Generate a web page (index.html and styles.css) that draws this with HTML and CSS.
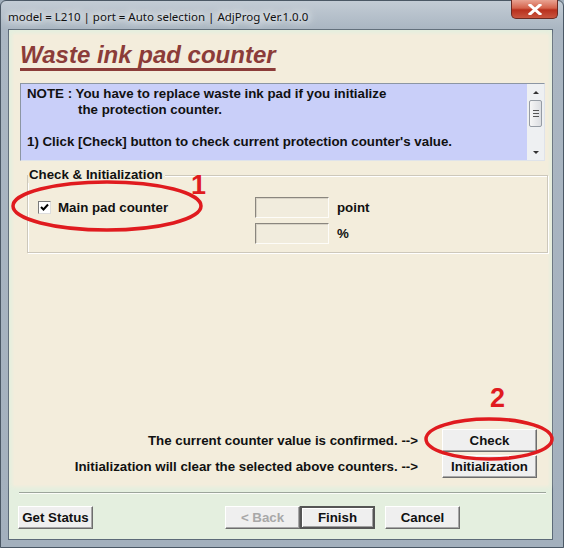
FILE: index.html
```html
<!DOCTYPE html>
<html>
  <head>
    <title>AdjProg</title>
    <link rel="stylesheet" href="styles.css">
  </head>
  <body>
    <div class="window">
      <div class="titlebar">
        <span class="caption">model = L210 | port = Auto selection | AdjProg Ver.1.0.0</span>
        <div class="close">
          <svg width="14" height="11" viewBox="0 0 14 11">
            <path d="M2 1 L12 10 M12 1 L2 10" stroke="#fff" stroke-width="3" stroke-linecap="square"/>
          </svg>
        </div>
      </div>

      <div class="client">
        <div class="page">
          <h1 class="heading">Waste ink pad counter</h1>

          <div class="note">
            <div class="note-text">
              <div>NOTE : You have to replace waste ink pad if you initialize</div>
              <div class="indent">the protection counter.</div>
              <div>&nbsp;</div>
              <div>1) Click [Check] button to check current protection counter's value.</div>
            </div>
            <div class="scrollbar">
              <div class="arrow up"></div>
              <div class="thumb">
                <span></span><span></span><span></span>
              </div>
              <div class="track"></div>
              <div class="arrow down"></div>
            </div>
          </div>

          <div class="group">
            <span class="group-title">Check &amp; Initialization</span>
            <div class="group-row">
              <label class="check">
                <span class="box">
                  <svg width="9" height="9" viewBox="0 0 9 9">
                    <path d="M1 4 L3.5 6.5 L8 1.5" stroke="#000" stroke-width="2" fill="none"/>
                  </svg>
                </span>
                Main pad counter
              </label>
              <div class="fields">
                <div class="field"><span class="textbox"></span><span>point</span></div>
                <div class="field"><span class="textbox"></span><span>%</span></div>
              </div>
            </div>
          </div>

          <div class="spacer"></div>

          <div class="action">
            <span>The current counter value is confirmed. --&gt;</span>
            <button class="btn wide">Check</button>
          </div>
          <div class="action">
            <span>Initialization will clear the selected above counters. --&gt;</span>
            <button class="btn wide">Initialization</button>
          </div>
        </div>

        <div class="separator"></div>

        <div class="footer">
          <button class="btn">Get Status</button>
          <div class="nav">
            <button class="btn disabled">&lt; Back</button>
            <button class="btn default">Finish</button>
            <button class="btn cancel">Cancel</button>
          </div>
        </div>
      </div>

      <!-- red call-outs drawn over the dialog -->
      <svg class="marks" width="564" height="548">
        <ellipse cx="107" cy="206" rx="94" ry="24" fill="none" stroke="#e01b1f" stroke-width="3.5"/>
        <ellipse cx="489" cy="439" rx="63" ry="20" fill="none" stroke="#e01b1f" stroke-width="3.5"/>
      </svg>
      <span class="num one">1</span>
      <span class="num two">2</span>
    </div>
  </body>
</html>
```

FILE: styles.css
```css
body {
  margin: 0;
  font-family: "Liberation Sans", Arial, sans-serif;
  background-color: #9fadba;
}
.window {
  position: relative;
  width: 564px;
  height: 548px;
  box-sizing: border-box;
  padding: 0 10px 7px 7px;
  border: 1px solid #4b5865;
  border-radius: 6px 6px 0 0;
  background: linear-gradient(180deg, #c3ccd5 0px, #aab6c2 28px, #a3b0bd 100%);
  display: flex;
  flex-direction: column;
}
.titlebar {
  height: 28px;
  display: flex;
  justify-content: space-between;
  align-items: flex-start;
  margin-right: -5px;
}
.caption {
  margin-top: 8px;
  font-family: "Noto Sans", sans-serif;
  font-size: 11.5px;
  color: #111;
  text-shadow: 0 0 6px #fff, 0 0 10px #fff, 0 0 14px #e8edf2;
}
.close {
  width: 45px;
  height: 18px;
  margin-top: -1px;
  border: 1px solid #6b2a22;
  border-top: none;
  border-radius: 0 0 5px 5px;
  background: linear-gradient(180deg, #e9a392 0%, #d4634c 45%, #b8301d 55%, #c9553f 100%);
  display: flex;
  align-items: center;
  justify-content: center;
}
.client {
  flex: 1;
  border: 1px solid #5c6a78;
  background-color: #e4efdf;
  display: flex;
  flex-direction: column;
  padding: 5px 4px 0 5px;
}
.page {
  height: 450px;
  background-color: #f3eddc;
  box-shadow: 0 0 4px 2px #f3eddc;
  display: flex;
  flex-direction: column;
  font-size: 13.3px;
  font-weight: bold;
  color: #111;
}
.heading {
  margin: 6px 0 0 6px;
  font-size: 24px;
  font-style: italic;
  font-weight: bold;
  color: #8b3c39;
  text-decoration: underline;
  text-decoration-thickness: 3px;
  text-underline-offset: 5px;
  line-height: 28px;
}
.note {
  margin: 14px 3px 0 6px;
  height: 78px;
  box-sizing: border-box;
  border: 1px solid #8c96a3;
  border-bottom-color: #dfe3ea;
  border-right-color: #dfe3ea;
  background-color: #c9cff9;
  display: flex;
}
.note-text {
  flex: 1;
  padding: 2px 0 0 6px;
  line-height: 16px;
}
.indent {
  padding-left: 51px;
}
.scrollbar {
  width: 17px;
  background-color: #eef0f2;
  display: flex;
  flex-direction: column;
  align-items: center;
}
.arrow {
  height: 16px;
  width: 17px;
  display: flex;
  align-items: center;
  justify-content: center;
}
.arrow.up::before {
  content: "";
  border: 3px solid transparent;
  border-bottom: 3px solid #333;
  border-top: none;
}
.arrow.down::before {
  content: "";
  border: 3px solid transparent;
  border-top: 3px solid #333;
  border-bottom: none;
}
.thumb {
  width: 13px;
  height: 27px;
  box-sizing: border-box;
  border: 1px solid #969ca4;
  border-radius: 2px;
  background: linear-gradient(90deg, #f6f6f6, #dcdee2);
  display: flex;
  flex-direction: column;
  justify-content: center;
  align-items: center;
  gap: 2px;
}
.thumb span {
  width: 6px;
  height: 1px;
  background-color: #555;
}
.track {
  flex: 1;
}
.group {
  margin: 14px 0 0 13px;
  height: 78px;
  box-sizing: border-box;
  border: 1px solid #cdc8bb;
  box-shadow: 1px 1px 0 #fff, inset 1px 1px 0 #fff;
  display: flex;
  flex-direction: column;
}
.group-title {
  align-self: flex-start;
  margin: -9px 0 0 0;
  padding: 0 2px 0 1px;
  line-height: 16px;
  background-color: #f3eddc;
}
.group-row {
  display: flex;
  padding-top: 14px;
}
.check {
  display: flex;
  align-items: center;
  gap: 7px;
  margin-left: 10px;
  width: 217px;
  height: 21px;
}
.box {
  width: 11px;
  height: 11px;
  border: 1px solid #7a7a7a;
  border-bottom-color: #ddd;
  border-right-color: #ddd;
  background-color: #fff;
  display: flex;
  align-items: center;
  justify-content: center;
}
.fields {
  display: flex;
  flex-direction: column;
  gap: 5px;
}
.field {
  display: flex;
  align-items: center;
  gap: 8px;
}
.textbox {
  width: 72px;
  height: 19px;
  border: 1px solid #8a867e;
  border-bottom-color: #fdfcf8;
  border-right-color: #fdfcf8;
  box-shadow: inset 1px 1px 0 #d8d3c6;
  background-color: #f1ecdd;
}
.spacer {
  flex: 1;
}
.action {
  display: flex;
  justify-content: flex-end;
  align-items: center;
  gap: 24px;
  margin-right: 11px;
  margin-bottom: 3px;
}
.action:last-child {
  margin-bottom: 7px;
}
.btn {
  height: 23px;
  width: 75px;
  padding: 0;
  font-family: "Liberation Sans", Arial, sans-serif;
  font-size: 13.3px;
  font-weight: bold;
  color: #111;
  background-color: #efefef;
  border: 1px solid;
  border-color: #fff #6d6d6d #6d6d6d #fff;
  box-shadow: inset -1px -1px 0 #a7a7a7;
}
.btn.wide {
  width: 95px;
}
.btn.disabled {
  color: #a8a8a8;
}
.btn.default {
  border: 2px solid #555;
  box-shadow: inset 1px 1px 0 #fff, inset -1px -1px 0 #a0a0a0;
}
.btn.cancel {
  margin-left: 10px;
}
.separator {
  margin: 7px 2px 0 5px;
  height: 1px;
  background-color: #9ca59b;
  border-bottom: 1px solid #fbfdf9;
}
.footer {
  display: flex;
  align-items: center;
  padding: 12px 0 0 4px;
}
.nav {
  display: flex;
  margin-left: 132px;
}
.marks {
  position: absolute;
  left: -1px;
  top: -1px;
  pointer-events: none;
}
.num {
  position: absolute;
  font-family: "Liberation Sans", Arial, sans-serif;
  font-weight: bold;
  font-size: 27px;
  color: #e01b1f;
  line-height: 1;
}
.num.one {
  left: 190px;
  top: 171px;
}
.num.two {
  left: 489px;
  top: 384px;
}
```
